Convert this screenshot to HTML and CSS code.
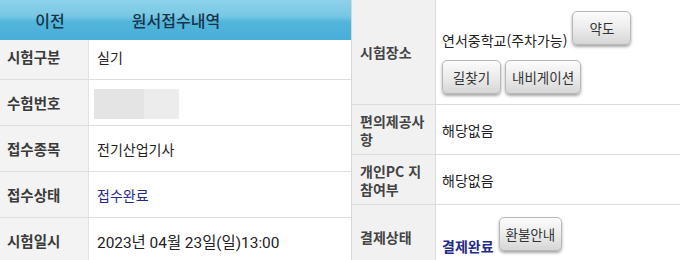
FILE: index.html
```html
<!DOCTYPE html>
<html lang="ko">
<head>
<meta charset="utf-8">
<link rel="stylesheet" href="styles.css">
</head>
<body>
<div class="wrap">
  <section class="left">
    <header class="appbar">
      <span class="back">이전</span>
      <span class="title">원서접수내역</span>
    </header>
    <div class="row">
      <div class="lab">시험구분</div>
      <div class="val">실기</div>
    </div>
    <div class="row">
      <div class="lab">수험번호</div>
      <div class="val"><span class="blur"><span class="blur-a"></span><span class="blur-b"></span></span></div>
    </div>
    <div class="row">
      <div class="lab">접수종목</div>
      <div class="val">전기산업기사</div>
    </div>
    <div class="row">
      <div class="lab">접수상태</div>
      <div class="val navy">접수완료</div>
    </div>
    <div class="row">
      <div class="lab">시험일시</div>
      <div class="val date">2023년 04월 23일(일)13:00</div>
    </div>
  </section>
  <section class="right">
    <div class="rrow r-place">
      <div class="rlab">시험장소</div>
      <div class="rval">
        <div class="line1"><span>연서중학교(주차가능)</span><span class="btn">약도</span></div>
        <div class="line2"><span class="btn">길찾기</span><span class="btn">내비게이션</span></div>
      </div>
    </div>
    <div class="rrow r-mid">
      <div class="rlab">편의제공사항</div>
      <div class="rval">해당없음</div>
    </div>
    <div class="rrow r-mid">
      <div class="rlab">개인PC 지참여부</div>
      <div class="rval">해당없음</div>
    </div>
    <div class="rrow r-pay">
      <div class="rlab">결제상태</div>
      <div class="rval">
        <div class="line1"><span class="navy bold">결제완료</span><span class="btn">환불안내</span></div>
      </div>
    </div>
  </section>
</div>
</body>
</html>
```

FILE: styles.css
```css
* { box-sizing: border-box; }
html, body {
  margin: 0;
  padding: 0;
  width: 680px;
  height: 260px;
  overflow: hidden;
  background: #ffffff;
}
body {
  font-family: Roboto, "Noto Sans CJK KR", sans-serif;
  color: #222;
}
.wrap {
  display: flex;
  width: 680px;
  height: 260px;
  overflow: hidden;
}
.left {
  width: 351px;
  flex: none;
  display: flex;
  flex-direction: column;
  background: #fff;
}
.appbar {
  position: relative;
  z-index: 1;
  height: 40px;
  flex: none;
  margin-bottom: -6px;
  display: flex;
  align-items: center;
  background: linear-gradient(#8dd2ea 0%, #79c7e4 40%, #52b5db 55%, #49aed8 100%);
  color: #17344a;
  font-family: "Noto Sans CJK KR", sans-serif;
  font-size: 16px;
  font-weight: 500;
}
.back {
  width: 100px;
  text-align: center;
}
.title {
  width: 152px;
  text-align: center;
}
.row {
  display: flex;
  height: 46px;
  flex: none;
  border-bottom: 1px solid #dedede;
}
.lab {
  width: 89px;
  flex: none;
  background: #f3f3f3;
  border-right: 1px solid #e2e2e2;
  display: flex;
  align-items: center;
  padding-left: 7px;
  font-family: "Noto Sans CJK KR", sans-serif;
  font-size: 14.5px;
  font-weight: 700;
  color: #3a3a3a;
}
.val {
  flex: 1;
  display: flex;
  align-items: center;
  padding-left: 8px;
  font-size: 14px;
  color: #222;
}
.val.date {
  font-size: 15.4px;
}
.navy { color: #1f2a8a; }
.bold { font-weight: 700; }
.blur {
  display: flex;
  width: 85px;
  height: 30px;
  margin-left: -3px;
  margin-top: 2px;
}
.blur-a { width: 50px; background: #e4e4e4; }
.blur-b { flex: 1; background: #ececec; }

.right {
  flex: 1;
  border-left: 1px solid #d6d6d6;
  display: flex;
  flex-direction: column;
  font-family: "Noto Sans CJK KR", sans-serif;
}
.rrow {
  display: flex;
  flex: none;
  border-bottom: 1px solid #dcdcdc;
}
.r-place { height: 105px; }
.r-mid { height: 50px; }
.r-pay { height: 64px; }
.rlab {
  width: 84px;
  flex: none;
  background: #f1f1f1;
  border-right: 1px solid #dcdcdc;
  display: flex;
  align-items: center;
  padding: 0 4px 0 8px;
  font-size: 14px;
  line-height: 18px;
  font-weight: 700;
  color: #444;
}
.rval {
  flex: 1;
  display: flex;
  flex-direction: column;
  justify-content: center;
  padding-left: 6px;
  font-size: 14px;
  color: #222;
}
.line1 {
  display: flex;
  align-items: flex-end;
  gap: 5px;
}
.line1 .btn { margin-bottom: 5px; }
.line2 {
  display: flex;
  gap: 4px;
  margin-top: 10px;
}
.btn {
  display: inline-flex;
  align-items: center;
  justify-content: center;
  min-width: 59px;
  height: 34px;
  padding: 0 6px;
  border: 1px solid #b8b8b8;
  border-radius: 5px;
  background: linear-gradient(#fbfbfb 0%, #ececec 50%, #d6d6d6 100%);
  box-shadow: 0 2px 3px rgba(0, 0, 0, 0.35);
  font-size: 13.5px;
  color: #333;
}
```
